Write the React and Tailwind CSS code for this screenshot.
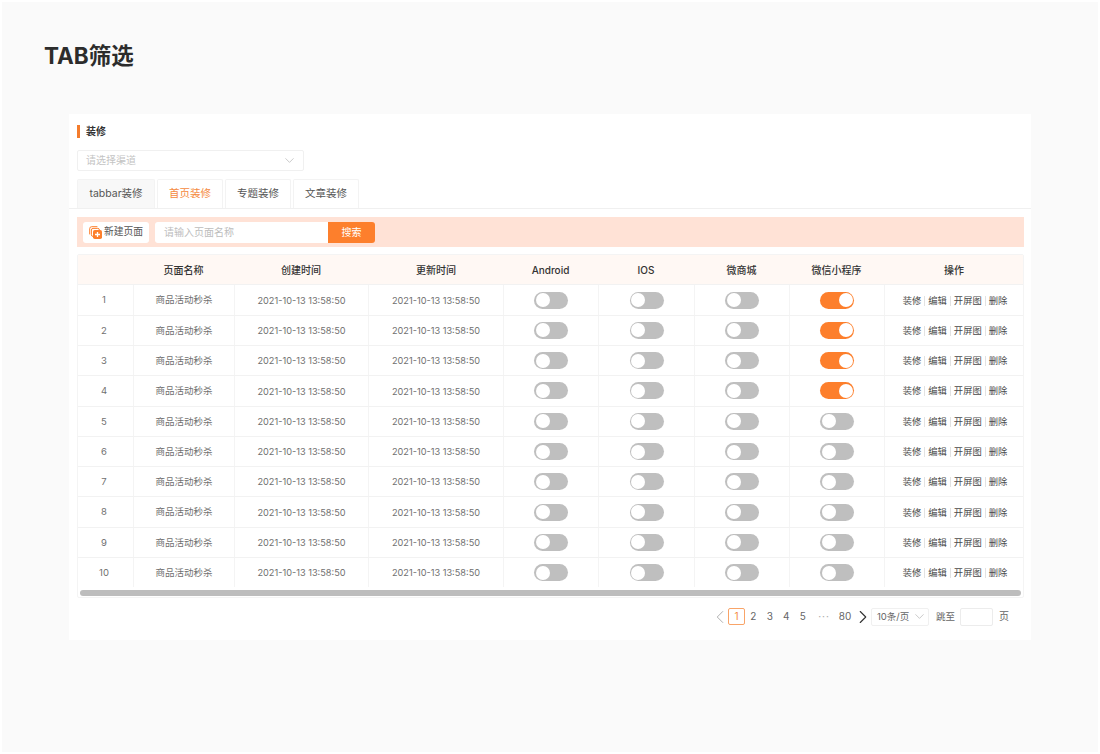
import React from 'react';
import { ChevronDown, ChevronLeft, ChevronRight } from 'lucide-react';

const FONT = "font-['Inter','Noto_Sans_CJK_SC',sans-serif]";
const GRID = 'grid grid-cols-[55px_101px_134px_135px_95px_96px_95px_95px_139px]';
const ROWS = [1, 2, 3, 4, 5, 6, 7, 8, 9, 10];

const Toggle = ({ on }) => (
  <div className={`flex h-[17px] w-[34px] items-center rounded-full p-[1.5px] ${on ? 'justify-end bg-[#fd7f2c]' : 'justify-start bg-[#bfbfbf]'}`}>
    <div className="h-[14px] w-[14px] rounded-full bg-white" />
  </div>
);

const Row = ({ n }) => (
  <div className={`${GRID} h-[30.3px] items-stretch border-t border-[#f2f2f2] text-[9.5px] text-[#707070]`}>
    <div className="flex items-center justify-center pr-[3px] pt-[1px]">{n}</div>
    <div className="flex items-center justify-center border-l border-[#f4f4f4] pt-[1px]">商品活动秒杀</div>
    <div className="flex items-center justify-center border-l border-[#f4f4f4] pt-[1px] text-[9.2px]">2021-10-13 13:58:50</div>
    <div className="flex items-center justify-center border-l border-[#f4f4f4] pt-[1px] text-[9.2px]">2021-10-13 13:58:50</div>
    <div className="flex items-center justify-center border-l border-[#f4f4f4]"><Toggle /></div>
    <div className="flex items-center justify-center border-l border-[#f4f4f4]"><Toggle /></div>
    <div className="flex items-center justify-center border-l border-[#f4f4f4]"><Toggle /></div>
    <div className="flex items-center justify-center border-l border-[#f4f4f4]"><Toggle on={n <= 4} /></div>
    <div className="flex items-center justify-center gap-[3px] border-l border-[#f4f4f4] pl-[2px] pt-[1px] text-[9.3px] text-[#4a4a4a]">
      <span>装修</span>
      <span className="h-[10px] w-px bg-[#e2e2e2]" />
      <span>编辑</span>
      <span className="h-[10px] w-px bg-[#e2e2e2]" />
      <span>开屏图</span>
      <span className="h-[10px] w-px bg-[#e2e2e2]" />
      <span>删除</span>
    </div>
  </div>
);

const NewPageIcon = () => (
  <svg width="13" height="13" viewBox="0 0 13 13" fill="none">
    <path d="M8 .7H2.7a2 2 0 0 0-2 2V8" stroke="#fd7f2c" strokeWidth="1" strokeLinecap="round" />
    <rect x="2.4" y="2.4" width="8" height="8" rx="1.6" stroke="#fd7f2c" strokeWidth="1" />
    <rect x="4" y="4" width="9" height="9" rx="1.8" fill="#fd7f2c" />
    <path d="M8.5 6v5M6 8.5h5" stroke="#fff" strokeWidth="1.3" />
  </svg>
);

export default function App() {
  return (
    <div className={`${FONT} h-[754px] w-[1100px] bg-white p-[2px]`}>
      <div className="h-[750px] bg-[#fafafa] pl-[42px] pt-[39px]">
        <h1 className="text-[22.5px] font-bold leading-[30px] text-[#2c2c2c]">TAB筛选</h1>

        <div className="ml-[25px] mt-[43px] h-[526px] w-[962px] bg-white pt-[10px]">
          {/* Section title */}
          <div className="ml-[8px] flex h-[14px] items-center gap-[6px]">
            <span className="h-[13px] w-[3px] bg-[#f47c2c]" />
            <span className="text-[10px] font-bold text-[#333]">装修</span>
          </div>

          {/* Channel select */}
          <div className="ml-[8px] mt-[12px] flex h-[21px] w-[227px] items-center justify-between rounded-[2px] border border-[#f0f0f0] pl-[8px] pr-[6px] text-[10px] text-[#c4c4c4]">
            <span>请选择渠道</span>
            <ChevronDown size={15} strokeWidth={1} className="text-[#aaa]" />
          </div>

          {/* Tabs */}
          <div className="mt-[8px] flex h-[30px] gap-[2px] border-b border-[#f0f0f0] pl-[8px] text-[10.5px] text-[#555]">
            <div className="flex w-[78px] items-center justify-center rounded-t-[2px] border border-b-0 border-[#f3f3f3] bg-[#f8f8f8]">tabbar装修</div>
            <div className="flex w-[66px] items-center justify-center rounded-t-[2px] border border-b-0 border-[#f3f3f3] text-[#f58a3e]">首页装修</div>
            <div className="flex w-[66px] items-center justify-center rounded-t-[2px] border border-b-0 border-[#f3f3f3]">专题装修</div>
            <div className="flex w-[66px] items-center justify-center rounded-t-[2px] border border-b-0 border-[#f3f3f3]">文章装修</div>
          </div>

          {/* Toolbar */}
          <div className="ml-[8px] mt-[8px] flex h-[30px] w-[947px] items-center bg-[#ffe2d6] pl-[6px]">
            <div className="flex h-[21px] w-[66px] items-center justify-center gap-[2px] rounded-[3px] bg-white text-[9.8px] text-[#555]">
              <NewPageIcon />
              <span>新建页面</span>
            </div>
            <div className="ml-[6px] flex h-[21px] w-[173px] items-center rounded-l-[3px] bg-white pl-[9px] text-[10px] text-[#bdbdbd]">请输入页面名称</div>
            <div className="flex h-[21px] w-[47px] items-center justify-center rounded-r-[3px] bg-[#fd7f2c] text-[10px] text-white">搜索</div>
          </div>

          {/* Table */}
          <div className="ml-[8px] mt-[7px] w-[947px] rounded-[2px] border border-[#f4f4f4]">
            <div className={`${GRID} h-[29.4px] items-center bg-[#fff8f4] pt-[1px] text-center text-[10px] font-medium text-[#333]`}>
              <span />
              <span>页面名称</span>
              <span>创建时间</span>
              <span className="pl-[1px]">更新时间</span>
              <span>Android</span>
              <span>IOS</span>
              <span>微商城</span>
              <span>微信小程序</span>
              <span className="pl-[1px]">操作</span>
            </div>
            {ROWS.map((n) => (
              <Row key={n} n={n} />
            ))}
            <div className="px-[2px] pb-[1px] pt-[3px]">
              <div className="h-[6px] rounded-full bg-[#bdbdbd]" />
            </div>
          </div>

          {/* Pagination */}
          <div className="mr-[22px] mt-[9.6px] flex h-[18px] items-center justify-end text-[10px] text-[#666]">
            <ChevronLeft size={22} strokeWidth={1} className="-mr-[1px] text-[#aaa]" />
            <span className="ml-[-2px] mr-[2px] flex h-[17px] w-[17px] items-center justify-center rounded-[2px] border border-[#f9a468] text-[#f58a3e]">1</span>
            <span className="ml-[-2px] w-[16.5px] text-center">2</span>
            <span className="w-[16.5px] text-center">3</span>
            <span className="w-[16.5px] text-center">4</span>
            <span className="w-[16.5px] text-center">5</span>
            <span className="w-[26px] text-center tracking-[1px] text-[#aaa]">···</span>
            <span className="w-[16px] text-center">80</span>
            <ChevronRight size={22} strokeWidth={1.2} className="-ml-[1px] -mr-[3px] text-[#333]" />
            <div className="flex h-[18px] w-[58px] items-center justify-between rounded-[2px] border border-[#f0f0f0] pl-[5px] pr-[1px] text-[9.5px]">
              <span>10条/页</span>
              <ChevronDown size={15} strokeWidth={1} className="text-[#aaa]" />
            </div>
            <span className="ml-[7px] text-[9.5px]">跳至</span>
            <div className="ml-[5px] h-[18px] w-[33px] rounded-[2px] border border-[#ececec]" />
            <span className="ml-[6px]">页</span>
          </div>
        </div>
      </div>
    </div>
  );
}
